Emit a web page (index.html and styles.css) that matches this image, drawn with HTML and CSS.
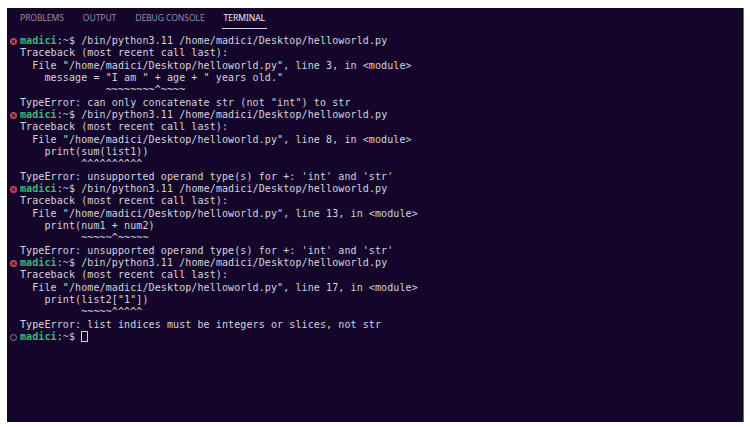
FILE: index.html
```html
<!DOCTYPE html>
<html>
<head>
<meta charset="utf-8">
<link rel="stylesheet" href="styles.css">
</head>
<body>
<div class="panel">
  <div class="tabs">
    <div class="tab">PROBLEMS</div>
    <div class="tab">OUTPUT</div>
    <div class="tab">DEBUG CONSOLE</div>
    <div class="tab active">TERMINAL</div>
  </div>
  <div class="term">
    <div class="line"><span class="gut"><span class="err"></span></span><span class="txt"><span class="u">madici</span>:<span class="p">~</span>$ /bin/python3.11 /home/madici/Desktop/helloworld.py</span></div>
    <div class="line"><span class="gut"></span><span class="txt">Traceback (most recent call last):</span></div>
    <div class="line"><span class="gut"></span><span class="txt">  File "/home/madici/Desktop/helloworld.py", line 3, in &lt;module&gt;</span></div>
    <div class="line"><span class="gut"></span><span class="txt">    message = "I am " + age + " years old."</span></div>
    <div class="line"><span class="gut"></span><span class="txt">              ~~~~~~~~^~~~~</span></div>
    <div class="line"><span class="gut"></span><span class="txt">TypeError: can only concatenate str (not "int") to str</span></div>
    <div class="line"><span class="gut"><span class="err"></span></span><span class="txt"><span class="u">madici</span>:<span class="p">~</span>$ /bin/python3.11 /home/madici/Desktop/helloworld.py</span></div>
    <div class="line"><span class="gut"></span><span class="txt">Traceback (most recent call last):</span></div>
    <div class="line"><span class="gut"></span><span class="txt">  File "/home/madici/Desktop/helloworld.py", line 8, in &lt;module&gt;</span></div>
    <div class="line"><span class="gut"></span><span class="txt">    print(sum(list1))</span></div>
    <div class="line"><span class="gut"></span><span class="txt">          ^^^^^^^^^^</span></div>
    <div class="line"><span class="gut"></span><span class="txt">TypeError: unsupported operand type(s) for +: 'int' and 'str'</span></div>
    <div class="line"><span class="gut"><span class="err"></span></span><span class="txt"><span class="u">madici</span>:<span class="p">~</span>$ /bin/python3.11 /home/madici/Desktop/helloworld.py</span></div>
    <div class="line"><span class="gut"></span><span class="txt">Traceback (most recent call last):</span></div>
    <div class="line"><span class="gut"></span><span class="txt">  File "/home/madici/Desktop/helloworld.py", line 13, in &lt;module&gt;</span></div>
    <div class="line"><span class="gut"></span><span class="txt">    print(num1 + num2)</span></div>
    <div class="line"><span class="gut"></span><span class="txt">          ~~~~~^~~~~~</span></div>
    <div class="line"><span class="gut"></span><span class="txt">TypeError: unsupported operand type(s) for +: 'int' and 'str'</span></div>
    <div class="line"><span class="gut"><span class="err"></span></span><span class="txt"><span class="u">madici</span>:<span class="p">~</span>$ /bin/python3.11 /home/madici/Desktop/helloworld.py</span></div>
    <div class="line"><span class="gut"></span><span class="txt">Traceback (most recent call last):</span></div>
    <div class="line"><span class="gut"></span><span class="txt">  File "/home/madici/Desktop/helloworld.py", line 17, in &lt;module&gt;</span></div>
    <div class="line"><span class="gut"></span><span class="txt">    print(list2["1"])</span></div>
    <div class="line"><span class="gut"></span><span class="txt">          ~~~~~^^^^^</span></div>
    <div class="line"><span class="gut"></span><span class="txt">TypeError: list indices must be integers or slices, not str</span></div>
    <div class="line"><span class="gut"><span class="idle"></span></span><span class="txt"><span class="u">madici</span>:<span class="p">~</span>$ <span class="cursor"> </span></span></div>
  </div>
</div>
</body>
</html>
```
FILE: styles.css
```css
html, body {
  margin: 0;
  padding: 0;
  background: #ffffff;
}
.panel {
  margin: 8px 0 0 7px;
  width: 737px;
  height: 414px;
  background: #14062a;
  border-right: 1px solid #6e6678;
  box-sizing: border-box;
  display: flex;
  flex-direction: column;
}
.tabs {
  display: flex;
  height: 20px;
  padding-top: 1px;
  padding-left: 13px;
  gap: 19px;
  font-family: "Noto Sans", "DejaVu Sans", sans-serif;
  font-size: 8.6px;
}
.tab {
  color: #948ca2;
  line-height: 18px;
  border-bottom: 1px solid transparent;
  letter-spacing: -0.1px;
}
.tab.active {
  color: #eeeaf4;
  border-bottom: 1px solid #d8d2e2;
  padding: 0 2px;
  margin-left: -2px;
}
.term {
  padding-top: 6px;
  font-family: "DejaVu Sans Mono", "Liberation Mono", monospace;
  font-size: 10px;
  letter-spacing: 0.1px;
  color: #d6d2dc;
}
.line {
  display: flex;
  height: 12.33px;
  line-height: 12.33px;
  align-items: center;
}
.gut {
  width: 13px;
  flex: none;
  display: flex;
  justify-content: center;
  align-items: center;
}
.txt {
  white-space: pre;
}
.u {
  color: #3cb878;
  font-weight: bold;
}
.p {
  color: #8fb3e0;
}
.err {
  width: 7px;
  height: 7px;
  border-radius: 50%;
  background: #e0405a;
  position: relative;
  margin-left: -1px;
}
.err::before, .err::after {
  content: "";
  position: absolute;
  left: 1px;
  top: 3px;
  width: 5px;
  height: 1px;
  background: #14062a;
  transform: rotate(45deg);
}
.err::after {
  transform: rotate(-45deg);
}
.idle {
  width: 5px;
  height: 5px;
  border-radius: 50%;
  border: 1px solid #8a8494;
  margin-left: -1px;
}
.cursor {
  display: inline-block;
  height: 11px;
  width: 7px;
  border: 1px solid #d6d2dc;
  vertical-align: middle;
  box-sizing: border-box;
}
```
